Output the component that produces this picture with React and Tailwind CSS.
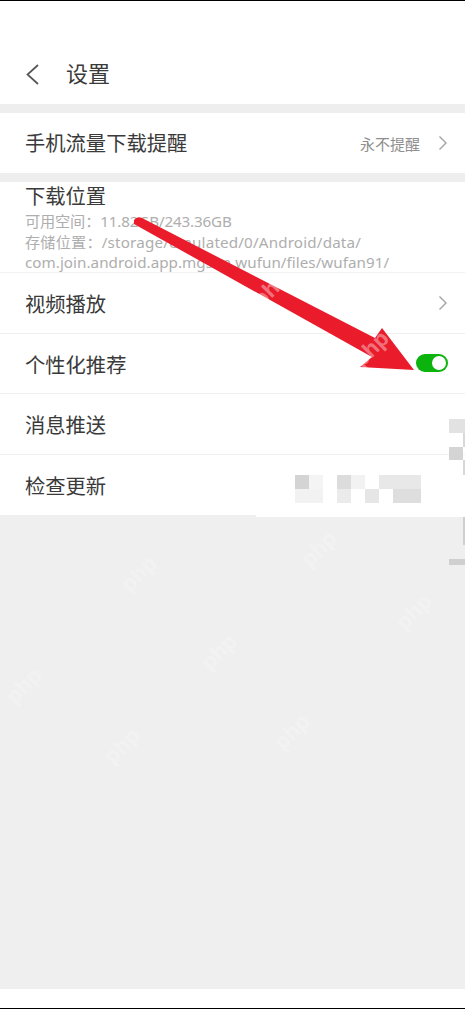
import React from 'react'

const CJK = "font-['Roboto','Noto_Sans_CJK_SC',sans-serif]"

// 打码色块，空字符串表示留白
const mosaic = [
  'bg-[#d4d4d4]', 'bg-[#f4f4f4]', '', 'bg-[#dcdcdc]', 'bg-[#f2f2f2]', '', 'bg-[#e8e8e8]', 'bg-[#e8e8e8]', 'bg-[#e8e8e8]',
  'bg-[#f2f2f2]', 'bg-[#f2f2f2]', '', 'bg-[#ebebeb]', '', 'bg-[#e6e6e6]', '', 'bg-[#dedede]', 'bg-[#dedede]',
]

const marks = [
  [140, 575], [220, 653], [25, 687], [320, 550], [415, 613], [293, 733], [123, 747], [372, 350], [272, 290],
]

const Chevron = () => (
  <svg width="10" height="16" viewBox="0 0 10 16" fill="none" stroke="#a3a3a3" strokeWidth="1.4">
    <path d="M1.5 1.5 L8 8 L1.5 14.5" />
  </svg>
)

function Row({ title, children, border = true }) {
  return (
    <div className={`h-[60.5px] pl-[25px] pr-[17px] flex items-center justify-between bg-white ${border ? 'border-b border-[#efefef]' : ''}`}>
      <span className="pt-[5px] text-[20.3px] text-[#3a3a3a]">{title}</span>
      {children}
    </div>
  )
}

export default function App() {
  return (
    <div className={`relative w-[465px] h-[1009px] overflow-hidden bg-white flex flex-col ${CJK}`}>
      <div className="h-px bg-black" />

      {/* 标题栏 */}
      <div className="h-[103px] flex items-end pb-[14px] pl-[26px] gap-[27px]">
        <svg className="mb-[5px]" width="13" height="21" viewBox="0 0 13 21" fill="none" stroke="#555555" strokeWidth="1.7">
          <path d="M12 1 L1.5 10.5 L12 20" />
        </svg>
        <span className="text-[22px] leading-[30px] text-[#3a3a3a]">设置</span>
      </div>
      <div className="h-[9px] bg-[#eeeeee]" />

      <div className="h-[60px] pl-[25px] pr-[17px] flex items-center justify-between">
        <span className="pt-[3px] text-[20.3px] text-[#3a3a3a]">手机流量下载提醒</span>
        <div className="flex items-center gap-[18px]">
          <span className="pt-[5px] text-[15px] text-[#8f8f8f]">永不提醒</span>
          <Chevron />
        </div>
      </div>
      <div className="h-[9px] bg-[#eeeeee]" />

      {/* 下载位置 */}
      <div className="h-[91px] pl-[25px] pt-[2px] border-b border-[#f2f2f2]">
        <div className="text-[20.3px] leading-[27px] text-[#3a3a3a]">下载位置</div>
        <div className="font-['Noto_Sans','Noto_Sans_CJK_SC',sans-serif] text-[15.2px] leading-[20.5px] text-[#aeaeae] whitespace-nowrap">
          <div className="tracking-[-0.15px]">可用空间：11.82GB/243.36GB</div>
          <div className="tracking-[0.17px]">存储位置：/storage/emulated/0/Android/data/</div>
          <div className="tracking-[0.04px]">com.join.android.app.mgsim.wufun/files/wufan91/</div>
        </div>
      </div>

      <Row title="视频播放"><Chevron /></Row>
      <Row title="个性化推荐">
        <div className="w-8 h-[18px] rounded-full bg-[#0cb30c] flex items-center justify-end pr-[2px]">
          <div className="w-[14px] h-[14px] rounded-full bg-white" />
        </div>
      </Row>
      <Row title="消息推送" />
      <Row title="检查更新" border={false} />

      <div className="flex-1 bg-[#efefef]" />
      <div className="h-[19px] bg-white" />
      <div className="h-px bg-black" />

      {/* 马赛克 */}
      <div className="absolute left-[256px] top-[455px] w-[209px] h-[62px] bg-white pl-[39px] pt-[20px]">
        <div className="grid grid-cols-[repeat(9,14px)] auto-rows-[14px]">
          {mosaic.map((c, i) => <div key={i} className={c} />)}
        </div>
      </div>
      <div className="absolute right-0 top-[419px] w-4 flex flex-col items-end">
        <div className="w-4 h-[14px] bg-[#e2e2e2]" />
        <div className="w-[2px] h-[14px] bg-[#d8d8d8]" />
        <div className="self-start w-[14px] h-[13px] bg-[#d4d4d4]" />
        <div className="w-[2px] h-[15px] bg-[#d8d8d8]" />
        <div className="mt-[42px] w-[2px] h-[28px] bg-[#cfcfcf]" />
        <div className="mt-[14px] w-4 h-[6px] bg-[#cfcfcf]" />
      </div>

      {/* 红色箭头和水印 */}
      <svg className="absolute left-0 top-0" width="465" height="1009" viewBox="0 0 465 1009">
        <path d="M134 220 Q137 216 142 218 L375 338 L382 328 L414 370 L360 367 L372 357 L134 224 Z" fill="#ea1c2c" />
        {marks.map(([x, y], i) => (
          <text
            key={i}
            x={x}
            y={y}
            textAnchor="middle"
            dominantBaseline="middle"
            transform={`rotate(-45 ${x} ${y})`}
            fill="#ffffff"
            fillOpacity={i > 6 ? 0.4 : 0.22}
            fontSize="22"
            fontWeight="700"
            fontFamily="Liberation Sans, sans-serif"
          >
            php
          </text>
        ))}
      </svg>
    </div>
  )
}
